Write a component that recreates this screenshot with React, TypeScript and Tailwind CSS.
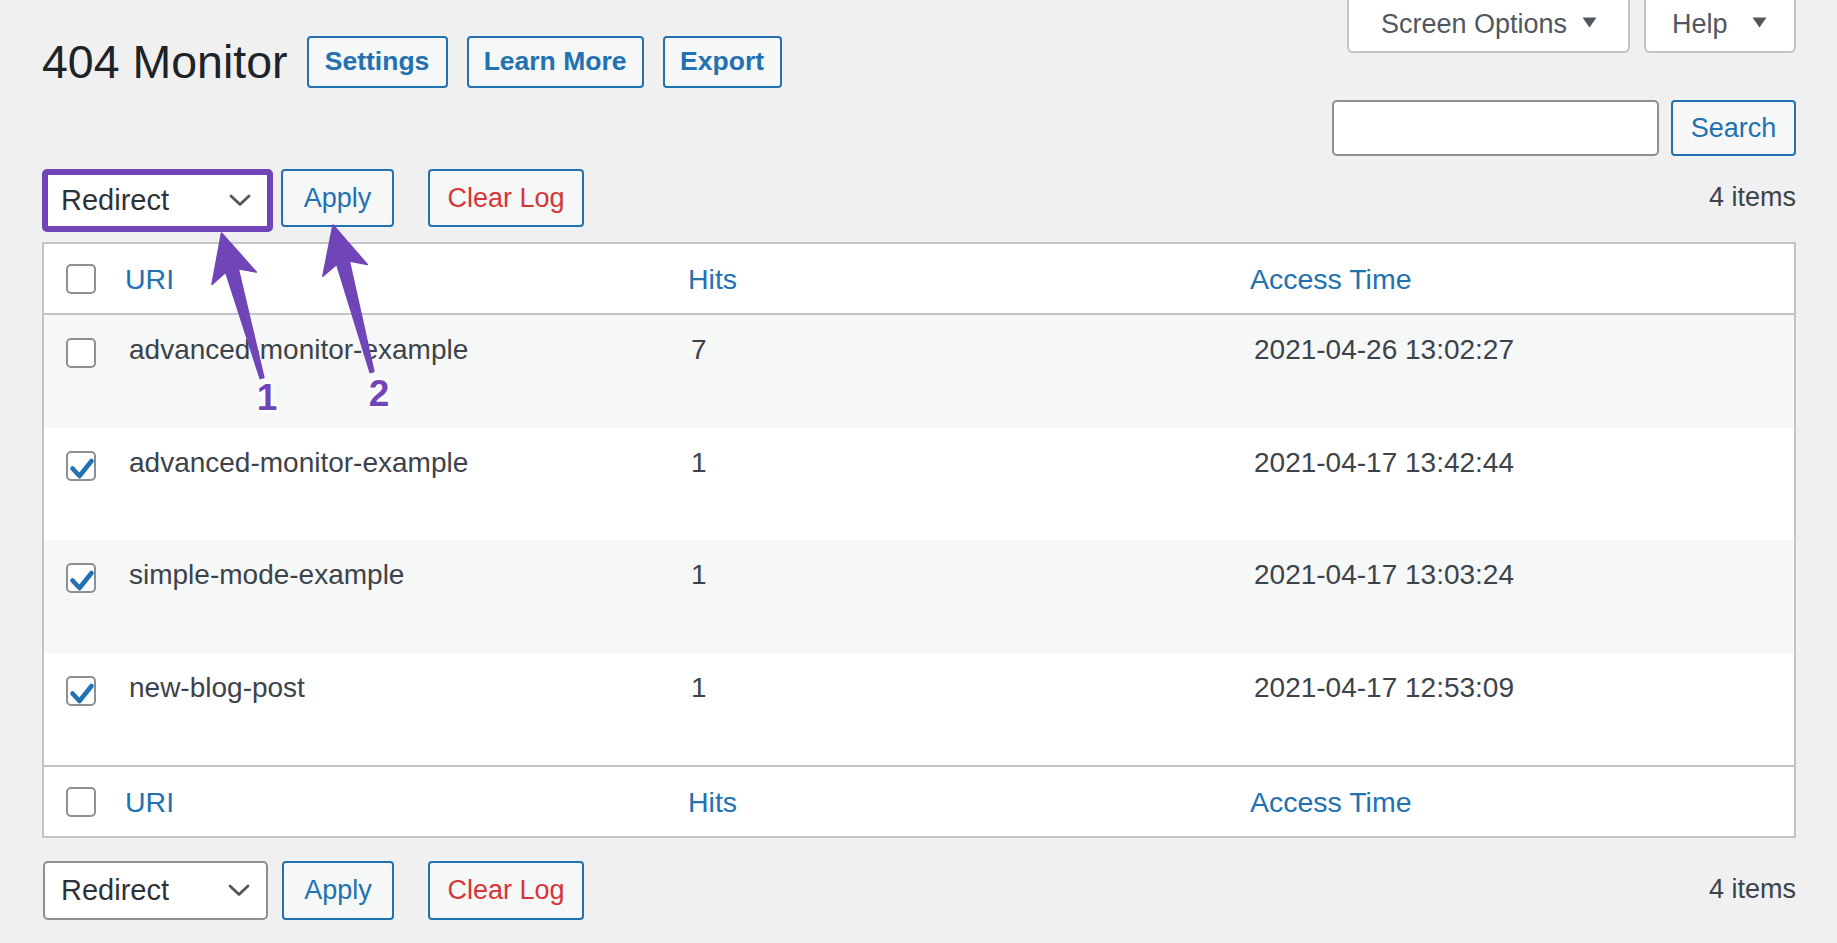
import React from "react";

const BLUE = "#2271b1";
const PURPLE = "#6f45b8";

function arrowPoints(tip: [number, number], tail: [number, number]) {
  const dx = tip[0] - tail[0];
  const dy = tip[1] - tail[1];
  const len = Math.hypot(dx, dy);
  const ux = dx / len;
  const uy = dy / len;
  const nx = -uy;
  const ny = ux;
  const L = 47;
  const W = 23;
  const notch = 8;
  const s1 = 6.5;
  const s0 = 2;
  const at = (d: number, w: number) =>
    `${(tip[0] - ux * d + nx * w).toFixed(1)},${(tip[1] - uy * d + ny * w).toFixed(1)}`;
  return [
    at(0, 0),
    at(L, W),
    at(L - notch, s1),
    at(len, s0),
    at(len, -s0),
    at(L - notch, -s1),
    at(L, -W),
  ].join(" ");
}

function Checkbox({ checked }: { checked?: boolean }) {
  return (
    <div className="w-[30px] h-[30px] rounded-[5px] border-2 border-[#8c8f94] bg-white flex items-center justify-center shrink-0">
      {checked && (
        <svg width="30" height="30" viewBox="0 0 30 30" className="-m-[2px]">
          <path d="M6.5 17.5 L13.5 25 L25.5 10" fill="none" stroke={BLUE} strokeWidth="4.6" strokeLinecap="round" strokeLinejoin="round" />
        </svg>
      )}
    </div>
  );
}

function Chevron() {
  return (
    <svg width="22" height="13" viewBox="0 0 22 13">
      <path d="M2 2 L11 10.5 L20 2" fill="none" stroke="#50575e" strokeWidth="2.8" strokeLinecap="round" strokeLinejoin="round" />
    </svg>
  );
}

function Caret() {
  return (
    <svg width="15" height="11" viewBox="0 0 15 11" className="mt-[-4px]">
      <path d="M0.5 0.5 H14.5 L7.5 10.5 Z" fill="#50575e" />
    </svg>
  );
}

const rows = [
  { uri: "advanced-monitor-example", hits: "7", time: "2021-04-26 13:02:27", checked: false },
  { uri: "advanced-monitor-example", hits: "1", time: "2021-04-17 13:42:44", checked: true },
  { uri: "simple-mode-example", hits: "1", time: "2021-04-17 13:03:24", checked: true },
  { uri: "new-blog-post", hits: "1", time: "2021-04-17 12:53:09", checked: true },
];

function HeaderRow({ top }: { top?: boolean }) {
  return (
    <div
      className={`grid grid-cols-[81px_563px_562px_1fr] items-center h-[71px] bg-white ${top ? "border-b-2" : "border-t-2"} border-[#c3c4c7]`}
    >
      <div className="pl-[22px]">
        <Checkbox />
      </div>
      <div className="text-[28.5px] text-[#2271b1] leading-[36px]">URI</div>
      <div className="text-[28.5px] text-[#2271b1] leading-[36px]">Hits</div>
      <div className="text-[28.5px] text-[#2271b1] leading-[36px]">Access Time</div>
    </div>
  );
}

export default function App() {
  return (
    <div className="relative min-h-[943px] w-full overflow-hidden bg-[#f0f0f1] pl-[42px] pr-[41px] font-['Liberation_Sans',Arial,sans-serif]">
      {/* Top row */}
      <div className="flex items-start justify-between h-[88px]">
        <div className="flex items-center pt-[36px]">
          <h1 className="text-[46.5px] leading-[52px] text-[#1d2327] font-normal mr-[19px]">404 Monitor</h1>
          <div className="flex gap-[19px]">
            {[
              { t: "Settings", w: "w-[141px]" },
              { t: "Learn More", w: "w-[177px]" },
              { t: "Export", w: "w-[119px]" },
            ].map((b) => (
              <button
                key={b.t}
                className={`${b.w} h-[52px] flex items-center justify-center border-2 border-[#2271b1] rounded-[4px] bg-[#f6f7f7] text-[#2271b1] font-bold text-[26.5px]`}
              >
                {b.t}
              </button>
            ))}
          </div>
        </div>
        <div className="flex gap-[14px]">
          <div className="w-[283px] h-[53px] bg-white border-2 border-t-0 border-[#c3c4c7] rounded-b-[6px] flex items-center pl-[32px] pb-[3px] text-[27px] text-[#50575e]">
            <span>Screen Options</span>
            <span className="ml-[15px] flex items-center">
              <Caret />
            </span>
          </div>
          <div className="w-[152px] h-[53px] bg-white border-2 border-t-0 border-[#c3c4c7] rounded-b-[6px] flex items-center pl-[26px] pb-[3px] text-[27px] text-[#50575e]">
            <span>Help</span>
            <span className="ml-[24px] flex items-center">
              <Caret />
            </span>
          </div>
        </div>
      </div>

      {/* Search row */}
      <div className="flex justify-end gap-[12px] mt-[12px]">
        <div className="w-[327px] h-[56px] bg-white border-2 border-[#8c8f94] rounded-[5px]" />
        <button className="w-[125px] h-[56px] flex items-center justify-center border-2 border-[#2271b1] rounded-[4px] bg-[#f6f7f7] text-[#2271b1] text-[27px]">
          Search
        </button>
      </div>

      {/* Top bulk actions */}
      <div className="flex items-start mt-[13px]">
        <div className="w-[231px] h-[63px] border-[6px] border-[#6f45b8] rounded-[5px] bg-white flex items-center justify-between pl-[13px] pr-[16px]">
          <span className="text-[29px] text-[#2c3338]">Redirect</span>
          <Chevron />
        </div>
        <button className="ml-[8px] w-[113px] h-[58px] flex items-center justify-center border-2 border-[#2271b1] rounded-[4px] bg-[#f6f7f7] text-[#2271b1] text-[27px]">
          Apply
        </button>
        <button className="ml-[34px] w-[156px] h-[58px] flex items-center justify-center border-2 border-[#2271b1] rounded-[4px] bg-[#f6f7f7] text-[#d63638] text-[27px]">
          Clear Log
        </button>
        <div className="ml-auto mt-[12px] text-[27px] leading-[32px] text-[#3c434a]">4 items</div>
      </div>

      {/* Table */}
      <div className="mt-[10px] border-2 border-[#c3c4c7] bg-white">
        <HeaderRow top />
        {rows.map((r, i) => (
          <div
            key={i}
            className={`grid grid-cols-[81px_563px_562px_1fr] items-start h-[112.5px] ${i % 2 === 0 ? "bg-[#f6f7f7]" : "bg-white"}`}
          >
            <div className="pl-[22px] pt-[23px]">
              <Checkbox checked={r.checked} />
            </div>
            <div className="pl-[4px] pt-[15px] text-[28px] leading-[40px] text-[#3c434a]">{r.uri}</div>
            <div className="pl-[3px] pt-[15px] text-[28px] leading-[40px] text-[#3c434a]">{r.hits}</div>
            <div className="pl-[4px] pt-[15px] text-[28px] leading-[40px] text-[#3c434a]">{r.time}</div>
          </div>
        ))}
        <HeaderRow />
      </div>

      {/* Bottom bulk actions */}
      <div className="flex items-start mt-[23px]">
        <div className="ml-px w-[225px] h-[59px] border-2 border-[#8c8f94] rounded-[5px] bg-white flex items-center justify-between pl-[16px] pr-[16px]">
          <span className="text-[29px] text-[#2c3338]">Redirect</span>
          <Chevron />
        </div>
        <button className="ml-[14px] w-[112px] h-[59px] flex items-center justify-center border-2 border-[#2271b1] rounded-[4px] bg-[#f6f7f7] text-[#2271b1] text-[27px]">
          Apply
        </button>
        <button className="ml-[34px] w-[156px] h-[59px] flex items-center justify-center border-2 border-[#2271b1] rounded-[4px] bg-[#f6f7f7] text-[#d63638] text-[27px]">
          Clear Log
        </button>
        <div className="ml-auto mt-[12px] text-[27px] leading-[32px] text-[#3c434a]">4 items</div>
      </div>

      {/* Annotation arrows */}
      <svg className="absolute left-0 top-0 pointer-events-none" width="1837" height="943" viewBox="0 0 1837 943">
        <polygon points={arrowPoints([221.5, 233], [262, 378])} fill={PURPLE} stroke={PURPLE} strokeWidth="1.5" strokeLinejoin="round" />
        <polygon points={arrowPoints([333, 225], [372, 372])} fill={PURPLE} stroke={PURPLE} strokeWidth="1.5" strokeLinejoin="round" />
        <text
          x="267"
          y="410"
          textAnchor="middle"
          fontFamily="'Liberation Sans', Arial, sans-serif"
          fontWeight="700"
          fontSize="37"
          fill={PURPLE}
          stroke="#ffffff"
          strokeWidth="5"
          paintOrder="stroke"
          strokeLinejoin="round"
        >
          1
        </text>
        <text
          x="379"
          y="406"
          textAnchor="middle"
          fontFamily="'Liberation Sans', Arial, sans-serif"
          fontWeight="700"
          fontSize="37"
          fill={PURPLE}
          stroke="#ffffff"
          strokeWidth="5"
          paintOrder="stroke"
          strokeLinejoin="round"
        >
          2
        </text>
      </svg>
    </div>
  );
}
